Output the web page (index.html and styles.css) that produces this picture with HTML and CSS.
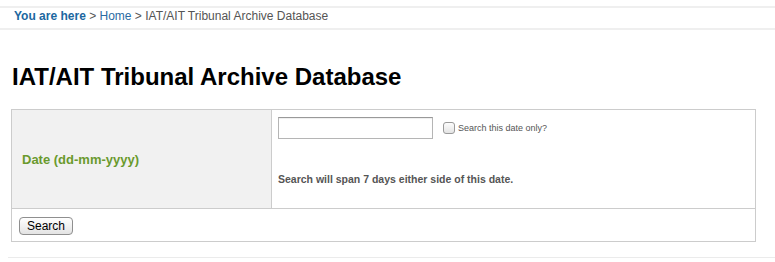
FILE: index.html
```html
<!DOCTYPE html>
<html lang="en">
<head>
    <meta charset="UTF-8">
    <title>IAT/AIT Tribunal Archive Database</title>
    <link rel="stylesheet" href="styles.css">
</head>
<body>
    <div class="breadcrumb">
        <span class="here">You are here</span> &gt; <a href="#">Home</a> &gt; IAT/AIT Tribunal Archive Database
    </div>

    <h1>IAT/AIT Tribunal Archive Database</h1>

    <form class="search-form">
        <table class="search-table">
            <tr class="date-row">
                <td class="field-label">Date (dd-mm-yyyy)</td>
                <td class="field-input">
                    <div class="date-line">
                        <input type="text" class="date-box">
                        <input type="checkbox" id="exact" class="exact-check">
                        <label for="exact" class="exact-label">Search this date only?</label>
                    </div>
                    <p class="note">Search will span 7 days either side of this date.</p>
                </td>
            </tr>
            <tr>
                <td class="actions" colspan="2">
                    <button type="button" class="search-btn">Search</button>
                </td>
            </tr>
        </table>
    </form>

    <hr class="divider">
</body>
</html>
```

FILE: styles.css
```css
body {
    margin: 0;
    font-family: "Liberation Sans", Arial, sans-serif;
    color: #555;
    background-color: white;
}
.breadcrumb {
    margin-top: 6px;
    border-top: 2px solid #efefef;
    border-bottom: 2px solid #efefef;
    height: 20px;
    line-height: 16px;
    padding-left: 14px;
    font-size: 12px;
    color: #555;
}
.breadcrumb .here {
    font-weight: bold;
    color: #1c679f;
}
.breadcrumb a {
    color: #2a6ba3;
    text-decoration: none;
}
h1 {
    margin: 33px 0 18px 12px;
    font-size: 24px;
    line-height: 28px;
    color: #000;
}
.search-form {
    margin: 0 0 0 11px;
}
.search-table {
    width: 745px;
    border-collapse: collapse;
    border: 1px solid #ccc;
}
.search-table td {
    border: 1px solid #ccc;
    padding: 0;
}
.field-label {
    width: 239px;
    height: 98px;
    padding: 0 10px !important;
    background-color: #f1f1f1;
    color: #6a9a2d;
    font-size: 13px;
    font-weight: bold;
    vertical-align: middle;
}
.field-input {
    vertical-align: top;
    padding: 7px 6px 0 6px !important;
}
.date-line {
    display: flex;
    align-items: center;
}
.date-box {
    box-sizing: border-box;
    width: 155px;
    height: 22px;
    margin: 0;
    border: 1px solid #b5b5b5;
    border-top-color: #999;
    box-shadow: inset 0 1px 1px #eee;
}
.exact-check {
    appearance: none;
    box-sizing: border-box;
    width: 12px;
    height: 12px;
    margin: 0 3px 0 10px;
    border: 1px solid #9a9a9a;
    border-radius: 3px;
    background: linear-gradient(#fdfdfd, #e4e4e4);
}
.exact-label {
    font-size: 9px;
    color: #555;
}
.note {
    margin: 34px 0 0 0;
    font-size: 10.5px;
    line-height: 13px;
    font-weight: bold;
    color: #555;
}
.actions {
    height: 32px;
    padding: 0 7px !important;
    vertical-align: middle;
}
.search-btn {
    box-sizing: border-box;
    width: 54px;
    height: 18px;
    padding: 0;
    border: 1px solid #8f8f8f;
    border-radius: 4px;
    background: linear-gradient(#ffffff, #e3e3e3);
    font-family: "Liberation Sans", Arial, sans-serif;
    font-size: 12px;
    line-height: 16px;
    color: #000;
}
.divider {
    margin: 15px 0 0 8px;
    border: 0;
    border-top: 1px solid #ebebeb;
}
```
